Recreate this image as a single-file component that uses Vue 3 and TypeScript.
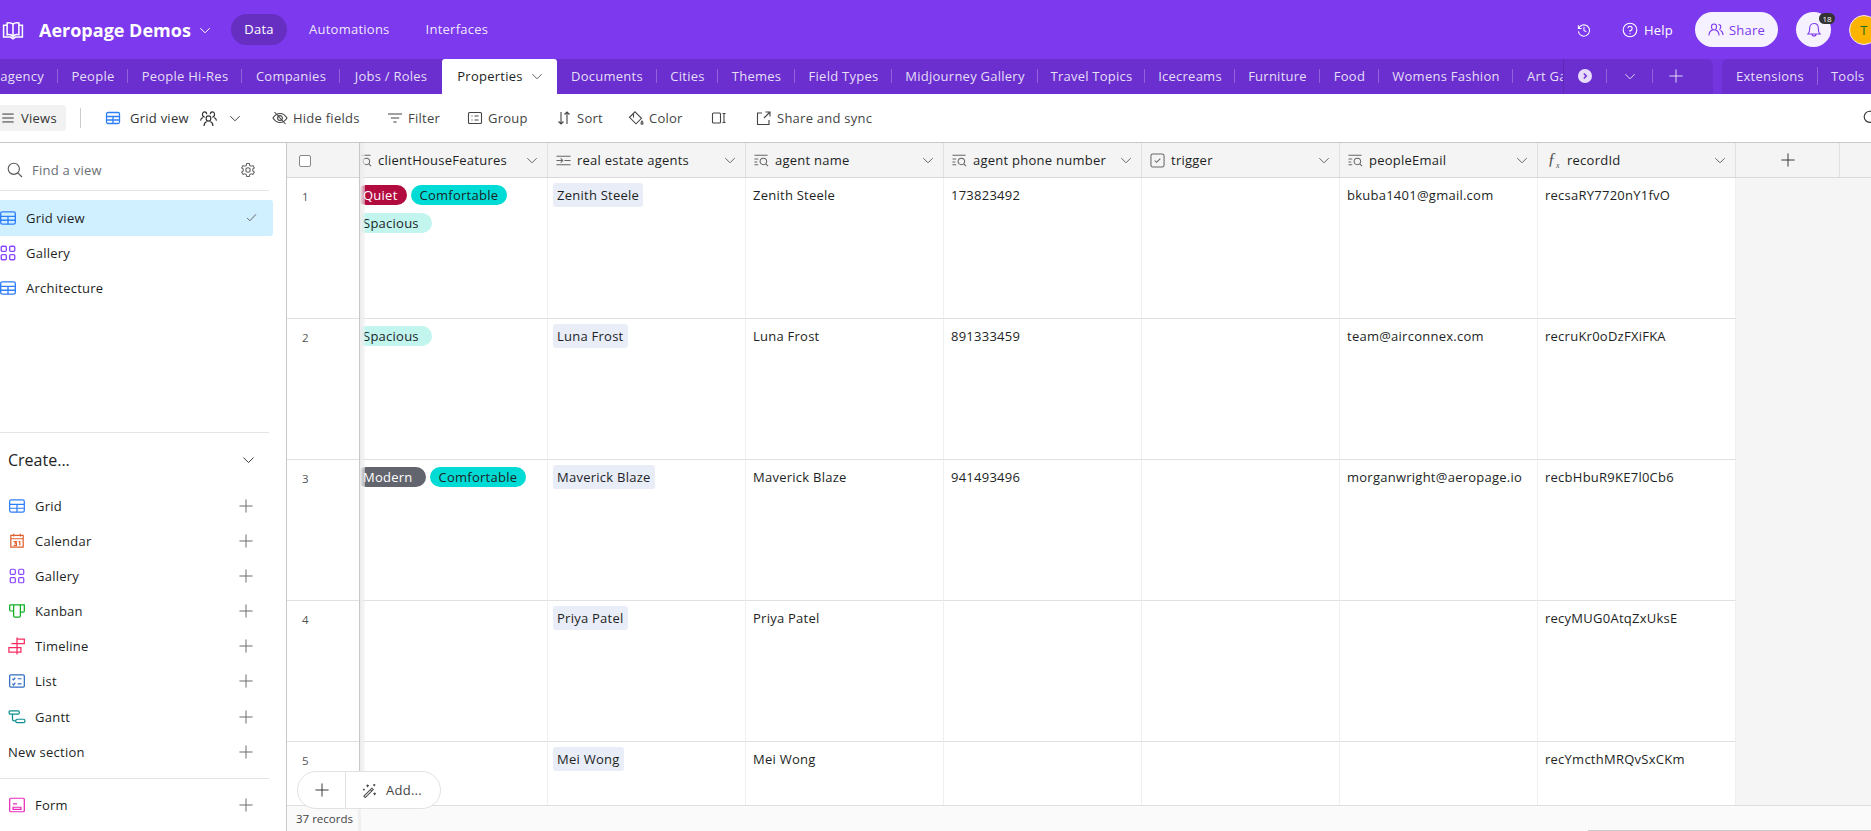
<script setup lang="ts">
const P = {
  table: ['M3 2.5h10A1.5 1.5 0 0 1 14.5 4v8a1.5 1.5 0 0 1-1.5 1.5H3A1.5 1.5 0 0 1 1.5 12V4A1.5 1.5 0 0 1 3 2.5z', 'M1.5 6.5h13M1.5 10h13M8 6.5v7'],
  gallery: ['M3 2h2.5A1 1 0 0 1 6.5 3v2.5a1 1 0 0 1-1 1H3a1 1 0 0 1-1-1V3a1 1 0 0 1 1-1zM10.500 2H13a1 1 0 0 1 1 1v2.500a1 1 0 0 1-1 1h-2.500a1 1 0 0 1-1-1V3a1 1 0 0 1 1-1zM3 9.500h2.500a1 1 0 0 1 1 1V13a1 1 0 0 1-1 1H3a1 1 0 0 1-1-1v-2.500a1 1 0 0 1 1-1zM10.500 9.500H13a1 1 0 0 1 1 1V13a1 1 0 0 1-1 1h-2.500a1 1 0 0 1-1-1v-2.500a1 1 0 0 1 1-1z'],
  calendar: ['M2.500 3h11v10.500h-11zM2.500 6h11M5 1.500V4M11 1.500V4', 'M5 8.500h2.500l-1 1.500h1v1.800H5M9.500 8.500h1v3.300'],
  kanban: ['M1.500 2.500h13v5.500a1 1 0 0 1-1 1H11V2.500M5 2.500V8H2.500a1 1 0 0 1-1-1V2.500M5 2.500v10a1 1 0 0 0 1 1h4a1 1 0 0 0 1-1V8'],
  timeline: ['M8 .5v15M8 1.800h6.500v4H8M8 9.500H.8v4H8v-4h3.500v4H8M3 5.800h5'],
  list: ['M2.500 2.500h11a1 1 0 0 1 1 1v9a1 1 0 0 1-1 1h-11a1 1 0 0 1-1-1v-9a1 1 0 0 1 1-1z', 'M4 6l1 1 1.500-2M4 10.500l1 1 1.500-2M8.500 6h3.500M8.500 10.500h3.500'],
  gantt: ['M2 2.500h7a1 1 0 0 1 1 1v1a1 1 0 0 1-1 1H2a1 1 0 0 1-1-1v-1a1 1 0 0 1 1-1zM8 10h6a1 1 0 0 1 1 1v1a1 1 0 0 1-1 1H8a1 1 0 0 1-1-1v-1a1 1 0 0 1 1-1zM4 5.500V10a1.500 1.500 0 0 0 1.500 1.500H7'],
  form: ['M2.500 2h11a1 1 0 0 1 1 1v10a1 1 0 0 1-1 1h-11a1 1 0 0 1-1-1V3a1 1 0 0 1 1-1z', 'M4.500 10h7v1.800h-7zM4.500 7h3.500'],
  plus: ['M8 .5v15M.5 8h15'],
  chev: ['M.5 5L8 12.500 15.500 5'],
  check: ['M2.500 8.500l3.500 3.500 7.500-8'],
  search: ['M6.800 1.200a5.600 5.600 0 1 1 0 11.200 5.600 5.600 0 0 1 0-11.200zM10.800 10.800l4.200 4.200'],
  gear: ['M6.700 1.500h2.600l.4 1.900 1.400.8 1.900-.6 1.300 2.200-1.500 1.300v1.800l1.500 1.300-1.300 2.200-1.900-.6-1.400.8-.4 1.900H6.700l-.4-1.900-1.400-.8-1.900.6-1.300-2.200L3.200 8.900V7.100L1.700 5.800 3 3.600l1.900.6 1.400-.8z', 'M8 5.800a2.200 2.200 0 1 1 0 4.400 2.200 2.200 0 0 1 0-4.400z'],
  menu: ['M1.500 3.500h13M1.500 8h13M1.500 12.500h13'],
  people: ['M6 2a2.500 2.500 0 0 1 2.500 2.500C8.500 6.500 7.500 8 6 8S3.500 6.500 3.500 4.500A2.500 2.500 0 0 1 6 2zM1 13.500c0-3 1.800-5 3.500-5.500M7.500 8c1.700.5 3.500 2.500 3.500 5.500M10.500 2.500c1.300 0 2.300 1 2.300 2.300 0 1.300-.6 2.400-1.500 2.900M12.500 8.500c1.500.7 2.500 2.500 2.500 4.500'],
  crowd: ['M8 5.500a2.200 2.200 0 0 1 2.200 2.200c0 1.500-1 2.800-2.200 2.800S5.800 9.200 5.800 7.700A2.200 2.200 0 0 1 8 5.500zM3.800 15c0-2.200 1.300-3.800 2.800-4.500M9.400 10.500c1.500.7 2.800 2.300 2.800 4.500', 'M4.500 6.800C3 6.500 2.300 5.300 2.300 4 2.300 2.800 3.200 1.800 4.300 1.800S6.300 2.800 6.300 4M.5 10c.2-1.500 1-2.500 2.300-3M11.500 6.800c1.500-.3 2.200-1.500 2.200-2.800 0-1.200-.9-2.200-2-2.200s-2 1-2 2.200M15.500 10c-.2-1.500-1-2.500-2.300-3'],
  eye: ['M1 8c1.800-3 4.200-4.500 7-4.500S13.200 5 15 8c-1.800 3-4.200 4.500-7 4.500S2.800 11 1 8z', 'M8 5.600a2.400 2.400 0 1 1 0 4.800 2.400 2.400 0 0 1 0-4.800zM2.500 2l11 12'],
  filter: ['M1 4h14M3.800 8h8.400M6.300 12h3.400'],
  group: ['M2.500 2.500h11a1 1 0 0 1 1 1v9a1 1 0 0 1-1 1h-11a1 1 0 0 1-1-1v-9a1 1 0 0 1 1-1z', 'M4.500 6h1M7.500 6h4M4.500 10h1M7.500 10h4'],
  sort: ['M5 2v12M2.500 11.500L5 14l2.500-2.500M11 14V2M8.500 4.500L11 2l2.500 2.500'],
  color: ['M7 1.800l6.500 6.500-5.500 5.500L1.500 7.300zM5.500 4v3.500', 'M14 11c.7 1 1 1.600 1 2.200a1 1 0 0 1-2 0c0-.6.3-1.200 1-2.200z'],
  rowh: ['M2.500 3h6a1 1 0 0 1 1 1v8a1 1 0 0 1-1 1h-6a1 1 0 0 1-1-1V4a1 1 0 0 1 1-1z', 'M13 3v10M11.500 3.500h3M11.500 12.500h3'],
  share: ['M6 3H1.500v11.500H13V10M8 8l6-6M9.500 2H14v4.500'],
  lookup: ['M.5 2.500h14M.5 6.500h4M.5 9.500h3M.5 12.500h4', 'M10 5.500a3.500 3.500 0 1 1 0 7 3.500 3.500 0 0 1 0-7zM12.500 11.500l2.500 2.500'],
  link: ['M.5 3.500h15M9 8h6.500M.5 12.500h15M.5 8h6M5 5.800l2.200 2.200L5 10.200'],
  checkbox: ['M3 1h10A2 2 0 0 1 15 3v10a2 2 0 0 1-2 2H3A2 2 0 0 1 1 13V3A2 2 0 0 1 3 1z', 'M5 8l2 2 4-4'],
  book: ['M10 3.500C11 2.500 13 2 15 2.500v10c-2-.5-4 0-5 1.500-1-1.500-3-2-5-1.500v-10C7 2 9 2.500 10 3.500zM10 3.500V14M5 4.500H2v10h6l2 1.500 2-1.500h6v-10h-3'],
  history: ['M2.500 3.500v3.500H6M2.800 7A6 6 0 1 1 2.500 10M8.500 5v4l2.500 1.500'],
  help: ['M8 1.200a6.800 6.800 0 1 1 0 13.600A6.800 6.800 0 0 1 8 1.200z', 'M5.900 6.200A2.100 2.100 0 1 1 8 8.500v1.200M8 11.300v.9'],
  bell: ['M8 1.500c2.700 0 4.300 2 4.300 4.700 0 3 .7 4.800 1.700 5.800H2c1-1 1.700-2.800 1.700-5.800C3.700 3.500 5.300 1.500 8 1.500zM6 12c0 2.700 4 2.700 4 0'],
  wand: ['M2 14L10.500 5.500l1.500 1.500L3.500 15.500zM9 7l1.500 1.500', 'M6 1.500v3M4.500 3h3M13 1v2.500M11.800 2.200h2.500M13.500 10v3M12 11.500h3M2 6v2M1 7h2']
} as const
type IconName = keyof typeof P

const tabs = [
  { t: 'agency', w: 58, first: true },
  { t: 'People', w: 70 }, { t: 'People Hi-Res', w: 114 }, { t: 'Companies', w: 98 },
  { t: 'Jobs / Roles', w: 102, noSep: true },
  { t: 'Properties', w: 115, active: true },
  { t: 'Documents', w: 100 }, { t: 'Cities', w: 61 }, { t: 'Themes', w: 77 }, { t: 'Field Types', w: 97 },
  { t: 'Midjourney Gallery', w: 146 }, { t: 'Travel Topics', w: 107 }, { t: 'Icecreams', w: 90 },
  { t: 'Furniture', w: 85 }, { t: 'Food', w: 59 }, { t: 'Womens Fashion', w: 134 }, { t: 'Art Gallery', w: 100, left: true }
]

const tools: { t: string; i: IconName; w: number }[] = [
  { t: 'Hide fields', i: 'eye', w: 115 },
  { t: 'Filter', i: 'filter', w: 80 },
  { t: 'Group', i: 'group', w: 89 },
  { t: 'Sort', i: 'sort', w: 72 },
  { t: 'Color', i: 'color', w: 83 },
  { t: '', i: 'rowh', w: 45 },
  { t: 'Share and sync', i: 'share', w: 120 }
]

const views: { t: string; i: IconName; c: string; active?: boolean }[] = [
  { t: 'Grid view', i: 'table', c: '#2d7ff9', active: true },
  { t: 'Gallery', i: 'gallery', c: '#8b46ff' },
  { t: 'Architecture', i: 'table', c: '#2d7ff9' }
]

const creators: { t: string; i: IconName; c: string }[] = [
  { t: 'Grid', i: 'table', c: '#2d7ff9' },
  { t: 'Calendar', i: 'calendar', c: '#e0602c' },
  { t: 'Gallery', i: 'gallery', c: '#8b46ff' },
  { t: 'Kanban', i: 'kanban', c: '#11af22' },
  { t: 'Timeline', i: 'timeline', c: '#f82b60' },
  { t: 'List', i: 'list', c: '#2f6cc0' },
  { t: 'Gantt', i: 'gantt', c: '#0d8f8f' }
]

const columns: { t: string; i: IconName | 'fx' }[] = [
  { t: 'clientHouseFeatures', i: 'lookup' },
  { t: 'real estate agents', i: 'link' },
  { t: 'agent name', i: 'lookup' },
  { t: 'agent phone number', i: 'lookup' },
  { t: 'trigger', i: 'checkbox' },
  { t: 'peopleEmail', i: 'lookup' },
  { t: 'recordId', i: 'fx' }
]

const rows = [
  { n: 1, tags: [['Quiet', 'red'], ['Comfortable', 'teal'], ['Spacious', 'mint']], agent: 'Zenith Steele', phone: '173823492', email: 'bkuba1401@gmail.com', id: 'recsaRY7720nY1fvO' },
  { n: 2, tags: [['Spacious', 'mint']], agent: 'Luna Frost', phone: '891333459', email: 'team@airconnex.com', id: 'recruKr0oDzFXiFKA' },
  { n: 3, tags: [['Modern', 'grey'], ['Comfortable', 'teal']], agent: 'Maverick Blaze', phone: '941493496', email: 'morganwright@aeropage.io', id: 'recbHbuR9KE7l0Cb6' },
  { n: 4, tags: [], agent: 'Priya Patel', phone: '', email: '', id: 'recyMUG0AtqZxUksE' },
  { n: 5, tags: [], agent: 'Mei Wong', phone: '', email: '', id: 'recYmcthMRQvSxCKm' }
]
</script>

<template>
  <div class="app">
    <header class="topbar">
      <svg class="logo" viewBox="0 0 20 17" fill="none" stroke="currentColor" stroke-width="1.300"><path v-for="d in P.book" :key="d" :d="d" /></svg>
      <span class="base">Aeropage Demos</span>
      <svg class="ic base-chev" viewBox="0 0 16 16"><path v-for="d in P.chev" :key="d" :d="d" /></svg>
      <nav class="nav">
        <span class="nav-item on">Data</span>
        <span class="nav-item">Automations</span>
        <span class="nav-item">Interfaces</span>
      </nav>
      <div class="top-right">
        <svg class="ic hist" viewBox="0 0 16 16"><path v-for="d in P.history" :key="d" :d="d" /></svg>
        <span class="help">
          <svg class="ic" viewBox="0 0 16 16"><path v-for="d in P.help" :key="d" :d="d" /></svg>
          Help
        </span>
        <span class="share-btn">
          <svg class="ic" viewBox="0 0 16 16"><path v-for="d in P.people" :key="d" :d="d" /></svg>
          Share
        </span>
        <span class="bell">
          <svg class="ic" viewBox="0 0 16 16"><path v-for="d in P.bell" :key="d" :d="d" /></svg>
          <span class="badge">18</span>
        </span>
        <span class="avatar">T</span>
      </div>
    </header>

    <div class="tabbar">
      <div class="tabs-main">
        <div class="tabs">
          <span
            v-for="tab in tabs"
            :key="tab.t"
            class="tab"
            :class="{ active: tab.active, 'no-sep': tab.noSep, first: tab.first, left: tab.left }"
            :style="{ width: tab.w + 'px' }"
          >
            {{ tab.t }}
            <svg v-if="tab.active" class="ic tab-chev" viewBox="0 0 16 16"><path v-for="d in P.chev" :key="d" :d="d" /></svg>
          </span>
        </div>
        <div class="tab-ctrl">
          <span class="ctrl c-more">
            <svg viewBox="0 0 14 14" class="more"><circle cx="7" cy="7" r="7" fill="#e8defb" /><path d="M5.800 4.500L8.300 7l-2.500 2.500" fill="none" stroke="#6b2fcf" stroke-width="1.500" /></svg>
          </span>
          <span class="ctrl"><svg class="ic ctrl-chev" viewBox="0 0 16 16"><path v-for="d in P.chev" :key="d" :d="d" /></svg></span>
          <span class="ctrl last"><svg class="ic ctrl-plus" viewBox="0 0 16 16"><path v-for="d in P.plus" :key="d" :d="d" /></svg></span>
        </div>
      </div>
      <div class="tabs-side">
        <span class="side-item sep">Extensions</span>
        <span class="side-item">Tools</span>
        <svg class="ic side-chev" viewBox="0 0 16 16"><path v-for="d in P.chev" :key="d" :d="d" /></svg>
      </div>
    </div>

    <div class="toolbar">
      <span class="views-btn">
        <svg class="ic i14" viewBox="0 0 16 16"><path v-for="d in P.menu" :key="d" :d="d" /></svg>
        Views
      </span>
      <span class="tb-sep"></span>
      <span class="gridview">
        <svg class="ic i16 blue" viewBox="0 0 16 16"><path v-for="d in P.table" :key="d" :d="d" /></svg>
        <span class="gv-label">Grid view</span>
        <svg class="ic i17" viewBox="0 0 16 16"><path v-for="d in P.crowd" :key="d" :d="d" /></svg>
        <svg class="ic i10 gv-chev" viewBox="0 0 16 16"><path v-for="d in P.chev" :key="d" :d="d" /></svg>
      </span>
      <span v-for="tool in tools" :key="tool.i" class="tool" :style="{ width: tool.w + 'px' }">
        <svg class="ic i16" viewBox="0 0 16 16"><path v-for="d in P[tool.i]" :key="d" :d="d" /></svg>
        <span v-if="tool.t">{{ tool.t }}</span>
      </span>
      <svg class="ic tb-search" viewBox="0 0 16 16"><path v-for="d in P.search" :key="d" :d="d" /></svg>
    </div>

    <main class="main">
      <aside class="sidebar">
        <div class="find">
          <svg class="ic find-ic" viewBox="0 0 16 16"><path v-for="d in P.search" :key="d" :d="d" /></svg>
          <span class="find-text">Find a view</span>
          <svg class="ic gear" viewBox="0 0 16 16"><path v-for="d in P.gear" :key="d" :d="d" /></svg>
        </div>
        <div class="views">
          <div v-for="v in views" :key="v.t" class="view" :class="{ active: v.active }">
            <svg class="ic view-ic" :style="{ color: v.c }" viewBox="0 0 16 16"><path v-for="d in P[v.i]" :key="d" :d="d" /></svg>
            <span class="view-name">{{ v.t }}</span>
            <svg v-if="v.active" class="ic view-check" viewBox="0 0 16 16"><path v-for="d in P.check" :key="d" :d="d" /></svg>
          </div>
        </div>
        <div class="create">
          <div class="create-head">
            <span>Create...</span>
            <svg class="ic create-chev" viewBox="0 0 16 16"><path v-for="d in P.chev" :key="d" :d="d" /></svg>
          </div>
          <div v-for="c in creators" :key="c.t" class="cr">
            <svg class="ic cr-ic" :style="{ color: c.c }" viewBox="0 0 16 16"><path v-for="d in P[c.i]" :key="d" :d="d" /></svg>
            <span class="cr-name">{{ c.t }}</span>
            <svg class="ic cr-plus" viewBox="0 0 16 16"><path v-for="d in P.plus" :key="d" :d="d" /></svg>
          </div>
          <div class="cr section">
            <span class="cr-name">New section</span>
            <svg class="ic cr-plus" viewBox="0 0 16 16"><path v-for="d in P.plus" :key="d" :d="d" /></svg>
          </div>
        </div>
        <div class="cr form">
          <svg class="ic cr-ic form-ic" viewBox="0 0 16 16"><path v-for="d in P.form" :key="d" :d="d" /></svg>
          <span class="cr-name">Form</span>
          <svg class="ic cr-plus" viewBox="0 0 16 16"><path v-for="d in P.plus" :key="d" :d="d" /></svg>
        </div>
      </aside>

      <section class="grid">
        <div class="table">
          <div class="hrow">
            <div class="numcol"><span class="box"></span></div>
            <div class="clip">
              <div v-for="col in columns" :key="col.t" class="hcell">
                <span v-if="col.i === 'fx'" class="fx">ƒ<sub>x</sub></span>
                <svg v-else class="ic i15" viewBox="0 0 16 16"><path v-for="d in P[col.i]" :key="d" :d="d" /></svg>
                <span class="hname">{{ col.t }}</span>
                <svg class="ic i10 hchev" viewBox="0 0 16 16"><path v-for="d in P.chev" :key="d" :d="d" /></svg>
              </div>
              <div class="addcol"><svg class="ic i14 dark" viewBox="0 0 16 16"><path v-for="d in P.plus" :key="d" :d="d" /></svg></div>
            </div>
          </div>
          <div v-for="r in rows" :key="r.n" class="row">
            <div class="numcol num">{{ r.n }}</div>
            <div class="clip">
              <div class="cell tagcell">
                <span v-for="tag in r.tags" :key="tag[0]" class="tag" :class="tag[1]">{{ tag[0] }}</span>
              </div>
              <div class="cell"><span class="chip">{{ r.agent }}</span></div>
              <div class="cell txt">{{ r.agent }}</div>
              <div class="cell txt">{{ r.phone }}</div>
              <div class="cell txt"></div>
              <div class="cell txt">{{ r.email }}</div>
              <div class="cell txt">{{ r.id }}</div>
            </div>
          </div>
          <div class="frozen"></div>
        </div>
        <footer class="foot">
          <div class="foot-count">37 records</div>
          <div class="scrollline"></div>
        </footer>
        <div class="addpill">
          <span class="add-plus"><svg class="ic i14 dark" viewBox="0 0 16 16"><path v-for="d in P.plus" :key="d" :d="d" /></svg></span>
          <span class="add-more">
            <svg class="ic i15" viewBox="0 0 16 16"><path v-for="d in P.wand" :key="d" :d="d" /></svg>
            Add...
          </span>
        </div>
      </section>
    </main>
  </div>
</template>

<style>
html, body { margin: 0; overflow: hidden; }
</style>

<style scoped>
.app {
  width: 1871px; height: 831px; overflow: hidden; display: flex; flex-direction: column;
  font-family: "Open Sans", "Noto Sans", sans-serif; font-size: 13px; letter-spacing: .25px; color: #1d1f25; background: #fff;
}
.ic { width: 16px; height: 16px; flex: none; fill: none; stroke: currentColor; stroke-width: 1.1; }
.i10 { width: 10px; height: 10px; stroke-width: 1.6; }
.i14 { width: 14px; height: 14px; }
.i15 { width: 15px; height: 15px; }
.i16 { width: 16px; height: 16px; }
.i17 { width: 17px; height: 17px; }
.blue { color: #2d7ff9; stroke-width: 1.3; }
.dark { color: #333; }

/* top bar */
.topbar { height: 59px; flex: none; background: #7c39ed; color: #fff; display: flex; align-items: center; padding-left: 1px; }
.logo { width: 24px; height: 20px; }
.base { margin-left: 14px; font-size: 18px; font-weight: 700; letter-spacing: 0; white-space: nowrap; width: 153px; }
.base-chev { width: 10px; height: 10px; margin-left: 8px; stroke-width: 1.6; }
.nav { display: flex; align-items: center; margin-left: 21px; }
.nav-item { color: rgba(255,255,255,.9); height: 31px; line-height: 31px; padding: 0 14px; border-radius: 16px; margin-right: 8px; }
.nav-item.on { background: #662fc2; color: #fff; width: 56px; box-sizing: border-box; text-align: center; padding: 0; }
.top-right { margin-left: auto; display: flex; align-items: center; margin-right: -8px; }
.hist { width: 15px; height: 15px; margin-right: 31px; }
.help { display: flex; align-items: center; gap: 6px; margin-right: 22px; }
.share-btn { width: 83px; height: 35px; border-radius: 18px; background: #f6f1fe; color: #7c39ed; display: flex; align-items: center; justify-content: center; gap: 5px; margin-right: 18px; }
.bell { position: relative; width: 35px; height: 35px; border-radius: 18px; background: #f6f1fe; color: #7c39ed; display: flex; align-items: center; justify-content: center; margin-right: 18px; }
.badge { position: absolute; left: 23px; top: 1px; width: 16px; height: 11px; border-radius: 6px; background: #333; color: #fff; font-size: 8px; letter-spacing: 0; line-height: 11px; text-align: center; }
.avatar { width: 30px; height: 30px; box-sizing: border-box; border-radius: 50%; background: #fcb400; border: 1px solid #f3e3ff; color: #1d6b1d; text-align: center; line-height: 28px; }

/* tabs */
.tabbar { height: 35px; flex: none; background: #7434de; display: flex; color: rgba(255,255,255,.85); }
.tabs-main { width: 1713px; flex: none; background: #6b2fcf; border-radius: 0 6px 0 0; display: flex; }
.tabs { width: 1563px; flex: none; display: flex; overflow: hidden; }
.tab { flex: none; position: relative; display: flex; align-items: center; justify-content: center; white-space: nowrap; box-sizing: border-box; padding-bottom: 2px; }
.tab.first { justify-content: flex-end; padding-right: 14px; }
.tab.left { justify-content: flex-start; padding-left: 14px; }
.tab:not(.active):not(.no-sep):not(.left)::after { content: ""; position: absolute; right: 0; top: 10px; height: 14px; width: 1px; background: rgba(255,255,255,.25); }
.tab.active { background: #fff; color: #1d1f25; border-radius: 3px 3px 0 0; gap: 9px; }
.tab-chev { width: 10px; height: 10px; color: #555; stroke-width: 1.5; }
.tab-ctrl { flex: 1; display: flex; border-left: 1px solid #5c28b5; align-items: center; padding-bottom: 2px; }
.ctrl { display: flex; align-items: center; justify-content: center; width: 45px; height: 14px; border-right: 1px solid rgba(255,255,255,.25); flex: none; }
.c-more { width: 42px; }
.ctrl.last { border: 0; }
.more { width: 14px; height: 14px; }
.ctrl-chev { width: 10px; height: 10px; stroke-width: 1.5; }
.ctrl-plus { width: 14px; height: 14px; }
.tabs-side { margin-left: 9px; flex: 1; background: #6b2fcf; border-radius: 6px 0 0 0; display: flex; align-items: center; padding: 0 0 2px 14px; }
.side-item { white-space: nowrap; }
.side-item.sep { padding-right: 13px; margin-right: 13px; border-right: 1px solid rgba(255,255,255,.25); }
.side-chev { width: 10px; height: 10px; margin-left: 8px; }

/* toolbar */
.toolbar { height: 48px; flex: none; box-sizing: border-box; display: flex; align-items: center; color: #444; }
.views-btn { width: 66px; height: 26px; background: #f2f2f2; border-radius: 0 3px 3px 0; display: flex; align-items: center; gap: 6px; padding-left: 1px; box-sizing: border-box; color: #333; }
.tb-sep { width: 1px; height: 20px; background: #ccc; margin: 0 24px 0 14px; }
.gridview { display: flex; align-items: center; width: 167px; color: #333; }
.gv-label { margin-left: 9px; width: 70px; white-space: nowrap; }
.gv-chev { margin-left: 13px; color: #444; }
.tool { flex: none; display: flex; align-items: center; gap: 5px; white-space: nowrap; }
.tb-search { margin-left: auto; margin-right: -8px; color: #333; }

/* main */
.main { flex: 1; min-height: 0; display: flex; border-top: 1px solid #c9c9c9; }
.sidebar { width: 287px; flex: none; box-sizing: border-box; border-right: 1px solid #c8c8c8; display: flex; flex-direction: column; }
.find { width: 269px; height: 48px; box-sizing: border-box; border-bottom: 1px solid #e4e4e4; display: flex; align-items: center; padding: 8px 0 0 7px; color: #555; }
.find-ic { width: 16px; height: 16px; }
.find-text { margin-left: 9px; color: #6b6f76; }
.gear { margin-left: auto; margin-right: 13px; color: #666; }
.views { padding-top: 9px; height: 242px; box-sizing: border-box; }
.view { width: 273px; height: 36px; display: flex; align-items: center; border-radius: 0 3px 3px 0; }
.view + .view { height: 35px; }
.view.active { background: #d1f0ff; }
.view-ic { width: 18px; height: 18px; margin: 0 -1px 0 -1px; stroke-width: 1.2; }
.view-name { margin-left: 10px; }
.view-check { width: 13px; height: 13px; margin-left: auto; margin-right: 15px; color: #555; }
.create { width: 269px; border-top: 1px solid #e4e4e4; padding-bottom: 9px; }
.create-head { height: 54px; margin-bottom: 1.5px; padding: 0 15px 0 8px; display: flex; align-items: center; justify-content: space-between; font-size: 16px; letter-spacing: 0; }
.create-chev { width: 11px; height: 11px; stroke-width: 1.4; color: #333; }
.cr { height: 35.15px; width: 269px; display: flex; align-items: center; padding: 0 16px 0 9px; box-sizing: border-box; }
.cr-ic { width: 18px; height: 18px; margin: 0 -1px; stroke-width: 1.1; }
.form-ic { color: #e929ba; }
.cr-name { margin-left: 10px; }
.cr-plus { width: 14px; height: 14px; margin-left: auto; color: #666; }
.section { padding-left: 8px; }
.section .cr-name { margin-left: 0; }
.form { border-top: 1px solid #e4e4e4; height: 53px; }

/* grid */
.grid { flex: 1; min-width: 0; position: relative; background: #f5f5f5; display: flex; flex-direction: column; }
.table { position: relative; flex: 1; min-height: 0; overflow: hidden; }
.hrow { height: 35px; display: flex; box-sizing: border-box; background: #f4f4f4; border-bottom: 1px solid #d9d9d9; }
.row { height: 141px; display: flex; box-sizing: border-box; }
.numcol { width: 72px; flex: none; box-sizing: border-box; background: #fff; }
.hrow .numcol { background: #f4f4f4; display: flex; padding: 12px 0 0 12px; }
.row .numcol { border-bottom: 1px solid #e0e0e0; }
.box { width: 12px; height: 12px; box-sizing: border-box; border: 1px solid #888; border-radius: 2px; background: #fff; }
.num { padding: 11px 0 0 15px; color: #555; font-size: 11.5px; letter-spacing: 0; line-height: 16px; }
.clip { flex: 1; min-width: 0; overflow: hidden; display: flex; }
.hcell { width: 198px; height: 34px; flex: none; box-sizing: border-box; border-right: 1px solid #e0e0e0; display: flex; align-items: center; padding: 0 10px 0 8px; color: #666; }
.hcell:first-child { padding-left: 7px; }
.hcell:first-child, .cell:first-child { margin-left: -9px; }
.hname { margin-left: 6px; white-space: nowrap; color: #1d1f25; }
.hchev { margin-left: auto; color: #666; }
.fx { width: 15px; font-family: "Liberation Serif", serif; font-style: italic; font-size: 17px; color: #555; text-align: center; line-height: 1; letter-spacing: 0; }
.fx sub { font-size: 8px; }
.addcol { width: 104px; height: 34px; flex: none; box-sizing: border-box; border-right: 1px solid #e0e0e0; display: flex; align-items: center; justify-content: center; }
.cell { width: 198px; flex: none; box-sizing: border-box; background: #fff; border-right: 1px solid #efefef; border-bottom: 1px solid #e0e0e0; padding: 5px 5px 0; }
.txt { padding: 5px 7px 0; line-height: 24px; white-space: nowrap; }
.chip { display: inline-block; height: 24px; line-height: 24px; padding: 0 4px; background: #e9edf8; border-radius: 3px; white-space: nowrap; }
.tagcell { display: flex; flex-wrap: wrap; align-content: flex-start; gap: 8px 4px; padding: 7px 6px 0; }
.tag { height: 20px; line-height: 20px; padding: 0 9px; border-radius: 10px; white-space: nowrap; }
.red { background: #b20b3f; color: #fff; padding-left: 7px; }
.teal { background: #00dcd5; }
.mint { background: #c2f5ee; padding: 0 13px 0 7px; }
.grey { background: #62646e; color: #fff; padding: 0 13px 0 7px; }
.frozen { position: absolute; left: 72px; top: 0; bottom: 0; width: 6px; box-sizing: border-box; border-left: 1px solid #c8c8c8; background: linear-gradient(90deg, #ececec, rgba(240,240,240,.5)); }
.foot { height: 26px; flex: none; position: relative; box-sizing: border-box; border-top: 1px solid #dedede; background: #fafafa; display: flex; }
.foot-count { width: 74px; box-sizing: border-box; padding-left: 9px; line-height: 26px; font-size: 11.5px; letter-spacing: 0; color: #444; border-right: 3px solid #f0f0f0; }
.scrollline { position: absolute; left: 1301px; right: 0; bottom: 0; height: 1px; background: #ccc; }
.addpill { position: absolute; left: 10px; bottom: 22px; height: 38px; width: 144px; box-sizing: border-box; border: 1px solid #e2e2e2; border-radius: 20px; background: #fff; display: flex; align-items: center; }
.add-plus { width: 48px; height: 100%; box-sizing: border-box; border-right: 1px solid #e2e2e2; display: flex; align-items: center; justify-content: center; }
.add-more { display: flex; align-items: center; gap: 9px; padding-left: 16px; color: #444; }
</style>
